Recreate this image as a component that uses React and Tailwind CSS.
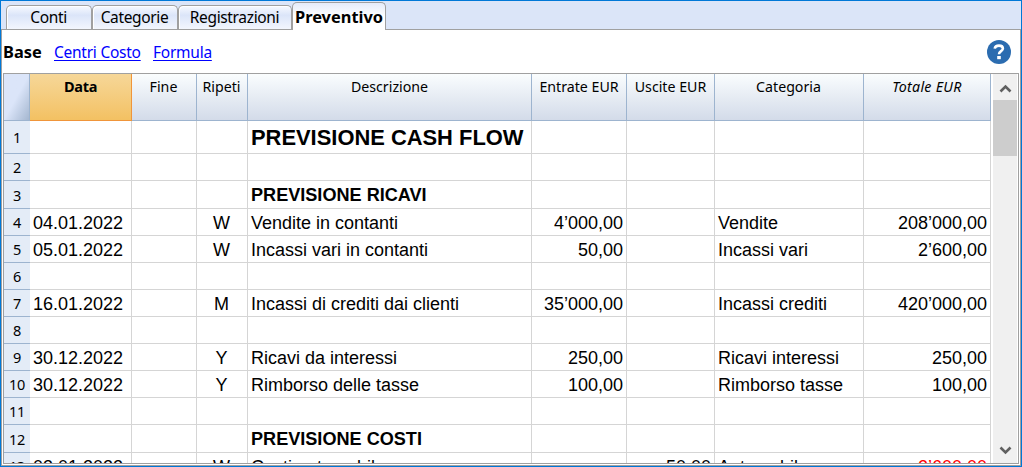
import React from "react";

const UI = "font-['Noto_Sans',sans-serif]";

const COLS = [
  { key: "data", label: "Data", w: "w-[102px]", head: "font-bold text-[14.5px] tracking-[-0.3px]", align: "justify-start pl-[3px]" },
  { key: "fine", label: "Fine", w: "w-[65px]", head: "pr-px", align: "justify-start" },
  { key: "rip", label: "Ripeti", w: "w-[51px]", head: "pr-px", align: "justify-center pr-px" },
  { key: "desc", label: "Descrizione", w: "w-[284px]", head: "", align: "justify-start pl-[3px]" },
  { key: "ent", label: "Entrate EUR", w: "w-[95px]", head: "", align: "justify-end pr-[3px]" },
  { key: "usc", label: "Uscite EUR", w: "w-[88px]", head: "", align: "justify-end pr-[3px]" },
  { key: "cat", label: "Categoria", w: "w-[149px]", head: "pr-px", align: "justify-start pl-[3px]" },
  { key: "tot", label: "Totale EUR", w: "w-[127px]", head: "italic tracking-[0.3px]", align: "justify-end pr-[3px]" },
];

const ROWS = [
  { h: "h-[33px]", desc: "PREVISIONE CASH FLOW", style: "title" },
  { h: "h-[27px]" },
  { h: "h-[28px]", desc: "PREVISIONE RICAVI", style: "bold" },
  { h: "h-[27px]", data: "04.01.2022", rip: "W", desc: "Vendite in contanti", ent: "4’000,00", cat: "Vendite", tot: "208’000,00" },
  { h: "h-[27px]", data: "05.01.2022", rip: "W", desc: "Incassi vari in contanti", ent: "50,00", cat: "Incassi vari", tot: "2’600,00" },
  { h: "h-[27px]" },
  { h: "h-[27px]", data: "16.01.2022", rip: "M", desc: "Incassi di crediti dai clienti", ent: "35’000,00", cat: "Incassi crediti", tot: "420’000,00" },
  { h: "h-[27px]" },
  { h: "h-[27px]", data: "30.12.2022", rip: "Y", desc: "Ricavi da interessi", ent: "250,00", cat: "Ricavi interessi", tot: "250,00" },
  { h: "h-[27px]", data: "30.12.2022", rip: "Y", desc: "Rimborso delle tasse", ent: "100,00", cat: "Rimborso tasse", tot: "100,00" },
  { h: "h-[27px]" },
  { h: "h-[28px]", desc: "PREVISIONE COSTI", style: "bold" },
  { h: "h-[27px]", data: "03.01.2022", rip: "W", desc: "Costi automobile", usc: "50,00", cat: "Automobile", tot: "2’600,00", negative: true },
];

const DESC_STYLE = {
  title: "font-bold text-[21.9px] pt-[2px]",
  bold: "font-bold text-[18.1px] pt-[2px]",
};

function Tab({ label, w }) {
  return (
    <div className={`${w} flex h-6 items-center justify-center rounded-t-[5px] border border-b-0 border-[#a0a0a0] bg-linear-to-b from-[#f8faff] via-[#dbe5f9] via-40% to-[#f3f6fd] pt-px pr-px text-[15.5px] tracking-[-0.35px] shadow-[inset_1px_1px_0_#fff]`}>
      {label}
    </div>
  );
}

function Tabs() {
  return (
    <div className="flex h-[29px] shrink-0 items-end border-b border-[#a0a0a0] bg-[#dbe5f8] pl-[5px]">
      <Tab label="Conti" w="w-[86px]" />
      <Tab label="Categorie" w="w-[86px]" />
      <Tab label="Registrazioni" w="w-[114px]" />
      <div className="-mb-px flex h-7 w-[94px] items-center justify-center rounded-t-[5px] border border-b-0 border-[#a0a0a0] bg-linear-to-b from-[#e4ebfa] to-white to-50% pt-[2px] text-[16.4px] font-bold">
        Preventivo
      </div>
    </div>
  );
}

function Toolbar() {
  return (
    <div className="flex h-[43px] shrink-0 items-center pr-[9px] pl-px text-[15.5px] tracking-[-0.25px]">
      <span className="w-[51px] pt-[2px] text-[16.4px] font-bold tracking-normal">Base</span>
      <a className="w-[99px] pt-[2px] text-[#0000ff] underline decoration-1 underline-offset-2">Centri Costo</a>
      <a className="pt-[2px] text-[#0000ff] underline decoration-1 underline-offset-2">Formula</a>
      <div className="ml-auto flex size-6 items-center justify-center rounded-full bg-[#2b6cb0]">
        <svg width="14" height="18" viewBox="0 0 14 18" fill="none">
          <path d="M2.7 5.6C3.1 3.3 5 2.6 7 2.6c2.3 0 3.9 1.2 3.9 3 0 2.6-3.9 2.6-3.9 5.6" stroke="white" strokeWidth="2.6" />
          <rect x="5.2" y="13" width="3.6" height="3.2" fill="white" />
        </svg>
      </div>
    </div>
  );
}

function Header() {
  return (
    <div className={`${UI} flex h-[47px] shrink-0 text-[14.2px]`}>
      <div className="w-[26px] border-r border-b border-[#9db4cf] bg-linear-to-br from-[#dbe5f9] from-50% to-[#a5b7d0]" />
      {COLS.map((c) => (
        <div
          key={c.key}
          className={`${c.w} ${c.head} flex justify-center border-r border-b pt-[2px] whitespace-nowrap ${
            c.key === "data"
              ? "border-[#f0953a] bg-linear-to-b from-[#f6d798] to-[#f3c162]"
              : "border-[#9db4cf] bg-linear-to-b from-[#fafdfe] to-[#d3dbe9]"
          }`}
        >
          {c.label}
        </div>
      ))}
    </div>
  );
}

function Row({ row, n }) {
  return (
    <div className={`${row.h} flex shrink-0`}>
      <div className={`${UI} flex w-[26px] items-center justify-center border-b border-[#9db4cf] bg-[#e4ecf7] pt-[2px] text-[14.5px] tracking-[-0.3px]`}>{n}</div>
      {COLS.map((c) => (
        <div
          key={c.key}
          className={`${c.w} ${c.align} flex items-center border-r border-b border-[#d5d5d5] whitespace-nowrap ${
            c.key === "desc" && row.style ? DESC_STYLE[row.style] : "pt-[2px] text-[18px]"
          } ${c.key === "tot" && row.negative ? "text-[#ff0000]" : ""}`}
        >
          {row[c.key]}
        </div>
      ))}
    </div>
  );
}

function Scrollbar() {
  return (
    <div className="ml-0.5 flex w-6 flex-col items-center bg-[#f0f0f0]">
      <svg className="h-[26px] w-6 shrink-0" viewBox="0 0 24 26" fill="none">
        <path d="M7.5 17.5l5-5 5 5" stroke="#606060" strokeWidth="2.6" />
      </svg>
      <div className="h-14 w-full bg-[#cdcdcd]" />
      <svg className="mt-auto h-[26px] w-6 shrink-0" viewBox="0 0 24 26" fill="none">
        <path d="M7.5 10.5l5 5 5-5" stroke="#606060" strokeWidth="2.6" />
      </svg>
    </div>
  );
}

export default function App() {
  return (
    <div className="flex h-[467px] w-[1022px] flex-col overflow-hidden border border-[#0078d7] bg-white font-['Liberation_Sans',Arial,sans-serif] text-black">
      <div className={`${UI} flex shrink-0 flex-col`}>
        <Tabs />
      </div>
      <div className="flex min-h-0 flex-1 flex-col border-x border-b border-[#a0a0a0]">
        <div className={UI}>
          <Toolbar />
        </div>
        <div className="mr-px mb-px ml-px flex min-h-0 flex-1 overflow-hidden border border-[#a0a0a0]">
          <div className="flex w-[987px] flex-col overflow-hidden">
            <Header />
            {ROWS.map((row, i) => (
              <Row key={i} row={row} n={i + 1} />
            ))}
          </div>
          <Scrollbar />
        </div>
      </div>
    </div>
  );
}
